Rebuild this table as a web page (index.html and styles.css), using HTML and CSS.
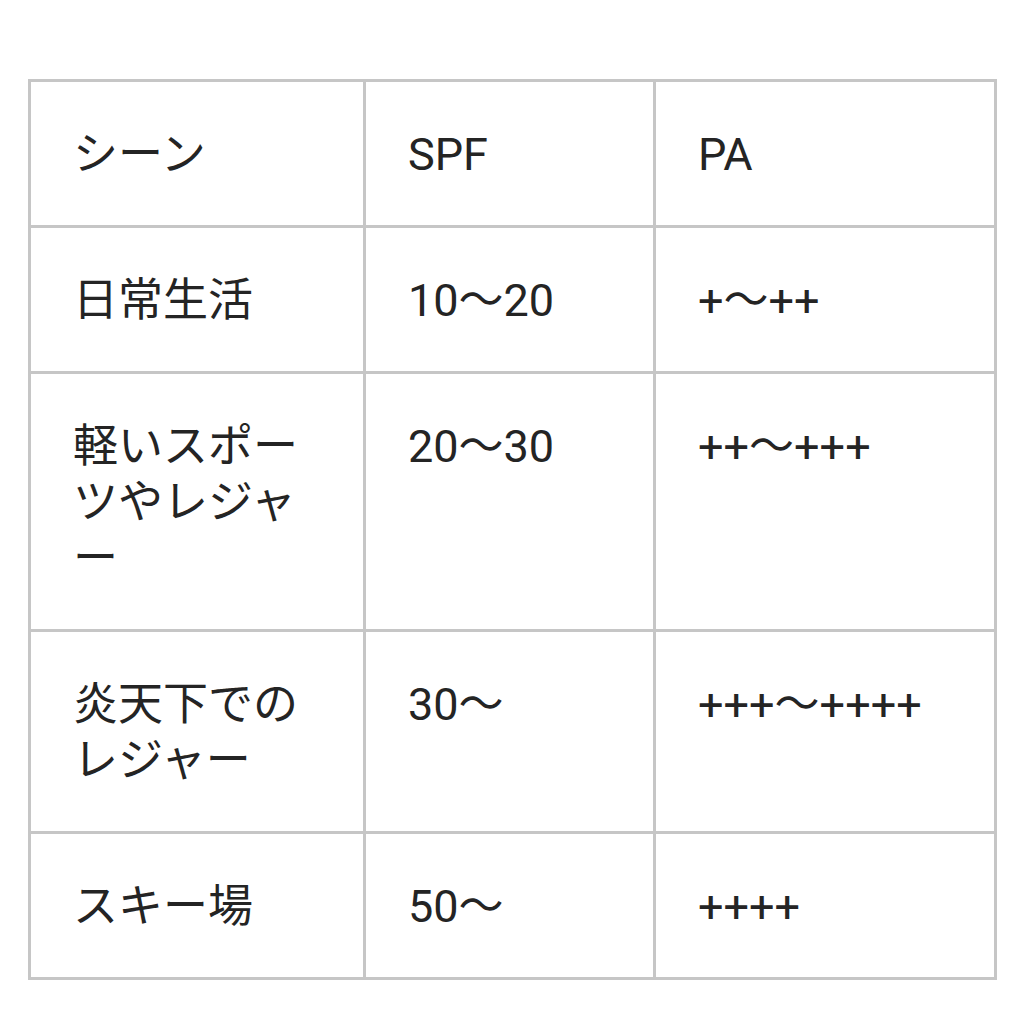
FILE: index.html
```html
<!DOCTYPE html>
<html lang="ja">
<head>
<meta charset="utf-8">
<link rel="stylesheet" href="styles.css">
</head>
<body>
<table class="uv-table">
  <colgroup>
    <col class="c1"><col class="c2"><col class="c3">
  </colgroup>
  <tr><td>シーン</td><td>SPF</td><td>PA</td></tr>
  <tr><td>日常生活</td><td>10〜20</td><td>+〜++</td></tr>
  <tr><td>軽いスポーツやレジャー</td><td>20〜30</td><td>++〜+++</td></tr>
  <tr><td>炎天下でのレジャー</td><td>30〜</td><td>+++〜++++</td></tr>
  <tr><td>スキー場</td><td>50〜</td><td>++++</td></tr>
</table>
</body>
</html>
```
FILE: styles.css
```css
html, body {
  margin: 0;
  padding: 0;
  background: #ffffff;
}
body {
  padding: 79px 0 0 28px;
  font-family: Roboto, "Noto Sans CJK JP", sans-serif;
  color: #242424;
}
.uv-table {
  border-collapse: collapse;
  table-layout: fixed;
  width: 966px;
  font-size: 45px;
  line-height: 56px;
}
.c1 { width: 335px; }
.c2 { width: 290px; }
.c3 { width: 341px; }
.uv-table td {
  border: 3px solid #c6c6c6;
  padding: 45px 42px 42px 42px;
  vertical-align: top;
  text-align: left;
  word-break: break-all;
}
```
